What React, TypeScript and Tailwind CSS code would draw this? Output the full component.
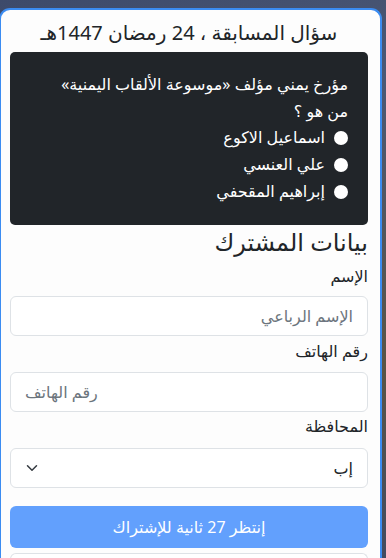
import { ChevronDown } from 'lucide-react';

const options = ['اسماعيل الاكوع', 'علي العنسي', 'إبراهيم المقحفي'];

const font = { fontFamily: '"Noto Sans", "DejaVu Sans", sans-serif' };

export default function App() {
  return (
    <div
      className="min-h-[558px] w-[386px] overflow-hidden bg-[linear-gradient(160deg,#3d4a6a_0%,#4b5876_30%,#5a5446_70%,#3f4a63_100%)] pt-2"
      style={font}
    >
      {/* Card */}
      <div
        dir="rtl"
        className="-ml-[1px] w-[383px] rounded-t-[11px] border-2 border-b-0 border-[#3b8cf2] bg-[#fdfdfd] pb-2 pl-[9px] pr-[12px] text-[#212529]"
      >
        <h1 className="pt-[9px] pb-[5px] text-center text-[20px] leading-[28px]">
          سؤال المسابقة ، 24 رمضان 1447هـ
        </h1>

        {/* Question box */}
        <div className="rounded-[5px] bg-[#212529] pb-[20px] pr-[20px] pl-3 pt-[18px] text-white">
          <p className="text-[16px] leading-[28px]">مؤرخ يمني مؤلف «موسوعة الألقاب اليمنية»</p>
          <p className="text-[16px] leading-[26px]">من هو ؟</p>
          <div className="flex flex-col">
            {options.map((o) => (
              <label key={o} className="flex items-center gap-[9px] text-[16px] leading-[27px]">
                <span className="h-[14px] w-[14px] shrink-0 rounded-full bg-white" />
                <span>{o}</span>
              </label>
            ))}
          </div>
        </div>

        {/* Subscriber form */}
        <h2 className="mt-[3px] text-[24px] leading-[28px]">بيانات المشترك</h2>

        <div className="mt-[8px] flex flex-col">
          <span className="mb-[8px] text-[16px] leading-[24px]">الإسم</span>
          <input
            className="h-[40px] w-full rounded-[6px] border border-[#dee2e6] bg-white px-[14px] text-[16px] outline-none placeholder:text-[#6c757d]"
            placeholder="الإسم الرباعي"
          />

          <span className="mt-[3px] mb-[9px] text-[16px] leading-[24px]">رقم الهاتف</span>
          <input
            type="tel"
            dir="ltr"
            className="h-[40px] w-full rounded-[6px] border border-[#dee2e6] bg-white px-[14px] text-left text-[16px] outline-none placeholder:text-[#6c757d]"
            placeholder="رقم الهاتف"
          />

          <span className="mt-[2px] mb-[10px] text-[16px] leading-[24px]">المحافظة</span>
          <div className="flex h-[40px] w-full items-center justify-between rounded-[6px] border border-[#dee2e6] bg-white pl-[12px] pr-[14px] text-[16px]">
            <span>إب</span>
            <ChevronDown size={18} strokeWidth={2} className="text-[#343a40]" />
          </div>

          <button className="mt-[18px] h-[42px] w-full rounded-[6px] bg-[#62a0fd] text-[16px] text-white">
            إنتظر 27 ثانية للإشتراك
          </button>

          <div className="mt-[5px] h-[20px] w-full rounded-t-[6px] border border-b-0 border-[#dee2e6] bg-white" />
        </div>
      </div>
    </div>
  );
}
